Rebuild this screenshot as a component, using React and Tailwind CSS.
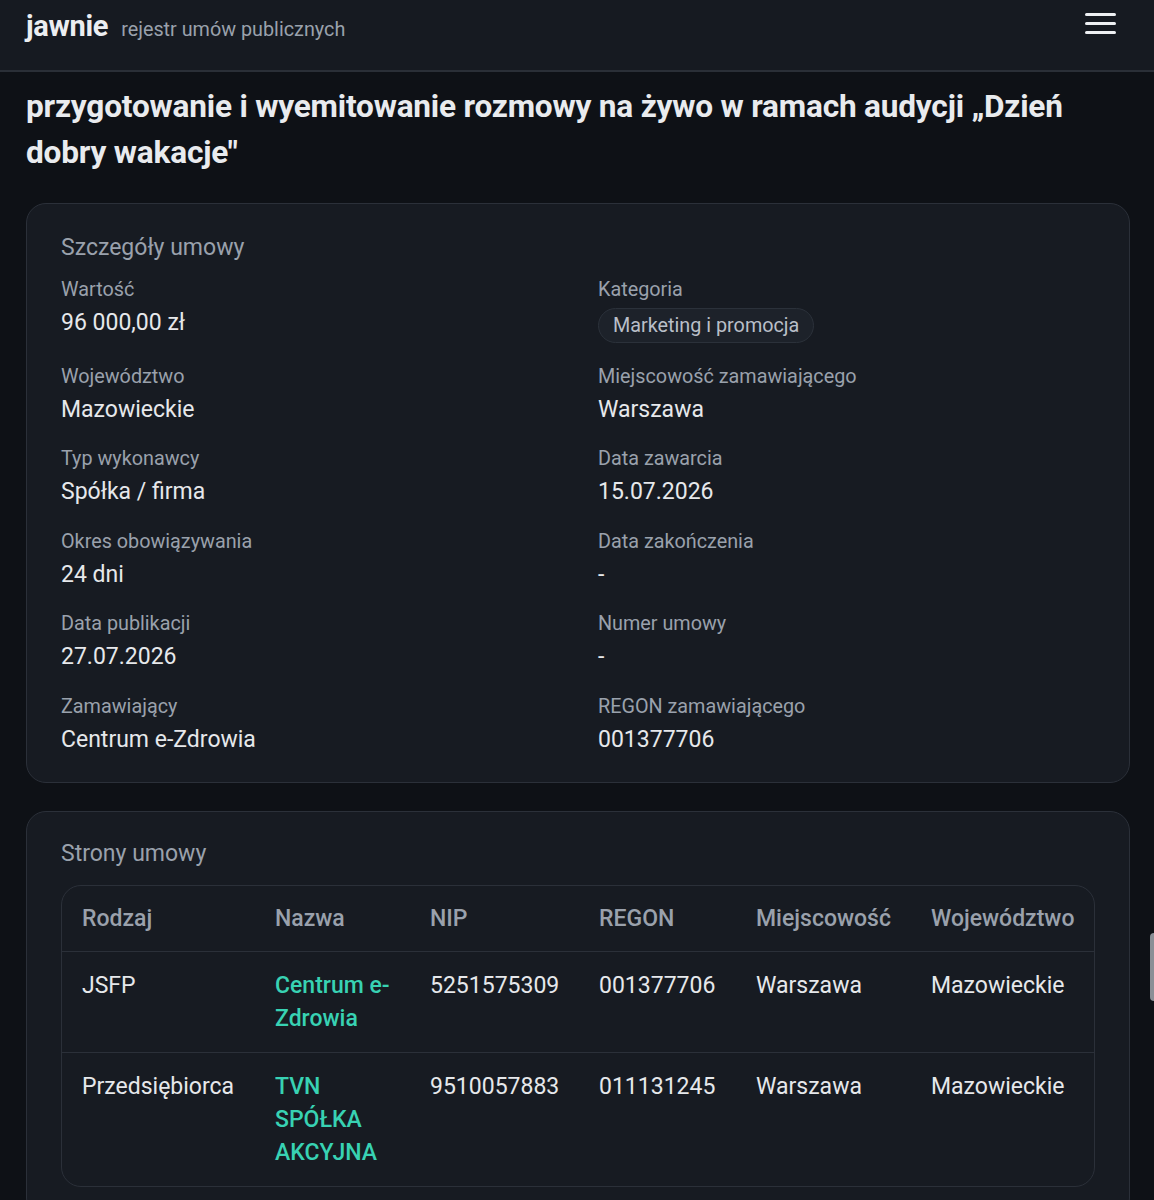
import React from 'react';

const details = [
    [{ label: 'Wartość', value: '96 000,00 zł' }, { label: 'Kategoria', pill: 'Marketing i promocja' }],
    [{ label: 'Województwo', value: 'Mazowieckie' }, { label: 'Miejscowość zamawiającego', value: 'Warszawa' }],
    [{ label: 'Typ wykonawcy', value: 'Spółka / firma' }, { label: 'Data zawarcia', value: '15.07.2026' }],
    [{ label: 'Okres obowiązywania', value: '24 dni' }, { label: 'Data zakończenia', value: '-' }],
    [{ label: 'Data publikacji', value: '27.07.2026' }, { label: 'Numer umowy', value: '-' }],
    [{ label: 'Zamawiający', value: 'Centrum e-Zdrowia' }, { label: 'REGON zamawiającego', value: '001377706' }],
];

const parties = [
    { type: 'JSFP', name: 'Centrum e-Zdrowia', nip: '5251575309', regon: '001377706', city: 'Warszawa', region: 'Mazowieckie' },
    { type: 'Przedsiębiorca', name: 'TVN SPÓŁKA AKCYJNA', nip: '9510057883', regon: '011131245', city: 'Warszawa', region: 'Mazowieckie' },
];

const Field = ({ item }) => (
    <div className="flex flex-col">
        <span className="text-[19.8px] leading-[26px] text-[#9aa1ac]">{item.label}</span>
        {item.pill ? (
            <span className="mt-[5px] self-start h-[35px] px-[14px] flex items-center rounded-full border border-[#2b313a] bg-[#1d222a] text-[19.8px] text-[#b9bfc8]">
                {item.pill}
            </span>
        ) : (
            <span className="mt-1 text-[23px] leading-[32px] text-[#e6e8eb]">{item.value}</span>
        )}
    </div>
);

export default function App() {
    return (
        <div className="min-h-[1200px] bg-[#0e1116] font-['Roboto',sans-serif] relative overflow-hidden">
            {/* top bar */}
            <header className="h-[72px] bg-[#161a21] border-b-2 border-[#2a2f37] flex items-start justify-between pl-[26px] pr-[38px]">
                <div className="flex items-baseline gap-[13px] pt-[5px]">
                    <span className="text-[29px] font-bold text-[#eceef1] tracking-[-0.3px]">jawnie</span>
                    <span className="text-[19.8px] text-[#9aa1ac]">rejestr umów publicznych</span>
                </div>
                <button className="mt-[13px] flex flex-col gap-[6px]">
                    <span className="block w-[31px] h-[3px] rounded-full bg-[#eef0f3]" />
                    <span className="block w-[31px] h-[3px] rounded-full bg-[#eef0f3]" />
                    <span className="block w-[31px] h-[3px] rounded-full bg-[#eef0f3]" />
                </button>
            </header>

            <main className="px-[26px] pt-[12px] pr-[24px]">
                <h1 className="text-[31.6px] leading-[46px] font-bold text-[#e9ebee] tracking-[-0.2px]">
                    przygotowanie i wyemitowanie rozmowy na żywo w ramach audycji „Dzień dobry wakacje"
                </h1>

                <section className="mt-[27px] rounded-[20px] border border-[#2b3039] bg-[#171b22] px-[34px] pt-[28px] pb-[26px]">
                    <h2 className="text-[23px] leading-[32px] text-[#9aa1ac]">Szczegóły umowy</h2>
                    <div className="mt-[13px] flex flex-col gap-[20.5px]">
                        {details.map((row, i) => (
                            <div key={i} className="grid grid-cols-2 gap-x-10">
                                <Field item={row[0]} />
                                <Field item={row[1]} />
                            </div>
                        ))}
                    </div>
                </section>

                <section className="mt-[28px] rounded-[20px] border border-[#2b3039] bg-[#171b22] px-[34px] pt-[26px] pb-[30px]">
                    <h2 className="text-[23px] leading-[32px] text-[#9aa1ac]">Strony umowy</h2>
                    <div className="mt-[15px] rounded-[20px] border border-[#2b3039] overflow-hidden">
                        <table className="w-full table-fixed border-collapse text-left">
                            <colgroup>
                                <col className="w-[193px]" />
                                <col className="w-[155px]" />
                                <col className="w-[169px]" />
                                <col className="w-[157px]" />
                                <col className="w-[175px]" />
                                <col />
                            </colgroup>
                            <thead>
                                <tr className="border-b border-[#2b3039]">
                                    {['Rodzaj', 'Nazwa', 'NIP', 'REGON', 'Miejscowość', 'Województwo'].map((h) => (
                                        <th key={h} className="px-5 py-4 text-[23px] leading-[33px] font-medium text-[#9aa1ac] whitespace-nowrap">
                                            {h}
                                        </th>
                                    ))}
                                </tr>
                            </thead>
                            <tbody>
                                {parties.map((p, i) => (
                                    <tr key={p.nip} className={i < parties.length - 1 ? 'border-b border-[#2b3039]' : ''}>
                                        <td className="px-5 py-[17px] align-top text-[23px] leading-[33px] text-[#e6e8eb]">{p.type}</td>
                                        <td className="pl-5 pr-[17px] py-[17px] align-top text-[23px] leading-[33px] font-medium text-[#38d2b3]">{p.name}</td>
                                        <td className="px-5 py-[17px] align-top text-[23px] leading-[33px] text-[#e6e8eb] whitespace-nowrap">{p.nip}</td>
                                        <td className="px-5 py-[17px] align-top text-[23px] leading-[33px] text-[#e6e8eb]">{p.regon}</td>
                                        <td className="px-5 py-[17px] align-top text-[23px] leading-[33px] text-[#e6e8eb]">{p.city}</td>
                                        <td className="px-5 py-[17px] align-top text-[23px] leading-[33px] text-[#e6e8eb]">{p.region}</td>
                                    </tr>
                                ))}
                            </tbody>
                        </table>
                    </div>
                </section>
            </main>

            {/* scroll thumb */}
            <div className="absolute right-0 top-[933px] w-[4px] h-[68px] rounded-l bg-[#8a8f96]" />
        </div>
    );
}
